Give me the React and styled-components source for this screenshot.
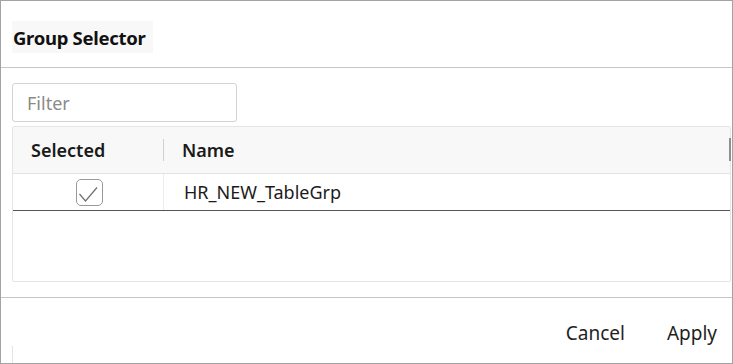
import React from "react";
import styled, { createGlobalStyle } from "styled-components";

const Global = createGlobalStyle`
  html, body { margin: 0; padding: 0; background: #fff; }
  body { font-family: "Noto Sans", "Open Sans", sans-serif; color: #1b1b1b; }
  * { box-sizing: border-box; }
`;

const Dialog = styled.div`
  width: 733px;
  height: 364px;
  border: 1px solid #a3a3a3;
  display: flex;
  flex-direction: column;
  background: #fff;
  position: relative;
`;

const Header = styled.div`
  height: 67px;
  border-bottom: 1px solid #c6c6c6;
  padding: 20px 0 0 11px;
  flex-shrink: 0;
`;

const Title = styled.div`
  display: inline-flex;
  align-items: center;
  height: 32px;
  width: 141px;
  padding-left: 1px;
  background: #f8f8f8;
  font-size: 18.5px;
  font-weight: 700;
  letter-spacing: -0.3px;
  color: #111;
`;

const Body = styled.div`
  padding: 15px 2px 15px 11px;
  display: flex;
  flex-direction: column;
  gap: 4px;
  border-bottom: 1px solid #c6c6c6;
`;

const Filter = styled.input`
  width: 225px;
  height: 39px;
  border: 1px solid #d3d3d3;
  border-radius: 3px;
  padding: 0 14px;
  font-family: inherit;
  font-size: 18px;
  color: #333;
  outline: none;
  &::placeholder { color: #8a8a8a; }
`;

const Table = styled.div`
  width: 719px;
  height: 156px;
  border: 1px solid #e5e5e5;
  border-radius: 2px;
  display: flex;
  flex-direction: column;
  position: relative;
`;

const HeadRow = styled.div`
  display: grid;
  grid-template-columns: 150px 1fr;
  height: 47px;
  background: #f8f8f8;
  border-bottom: 1px solid #e3e3e3;
  align-items: center;
`;

const HeadCell = styled.div`
  font-size: 18px;
  font-weight: 600;
  color: #1a1a1a;
  padding-left: ${(p) => p.$pad}px;
  height: 22px;
  display: flex;
  align-items: center;
  border-left: ${(p) => (p.$sep ? "1px solid #cfcfcf" : "none")};
`;

const ResizeMark = styled.div`
  position: absolute;
  right: -1px;
  top: 11px;
  width: 2px;
  height: 23px;
  background: #8f8f8f;
`;

const DataRow = styled.div`
  display: grid;
  grid-template-columns: 150px 1fr;
  height: 37px;
  border-bottom: 1px solid #555;
`;

const CheckCell = styled.div`
  display: flex;
  align-items: center;
  justify-content: center;
  padding-left: 2px;
`;

const Check = styled.div`
  width: 27px;
  height: 27px;
  border: 1px solid #9a9a9a;
  border-radius: 5px;
  display: flex;
  align-items: center;
  justify-content: center;
  background: #fff;
`;

const NameCell = styled.div`
  border-left: 1px solid #ececec;
  display: flex;
  align-items: center;
  padding-left: 20px;
  font-size: 18px;
  color: #1b1b1b;
`;

const Footer = styled.div`
  flex: 1;
  display: flex;
  justify-content: flex-end;
  align-items: flex-start;
  padding: 20px 15px 0 0;
  gap: 42px;
  position: relative;
`;

const Btn = styled.button`
  border: none;
  background: transparent;
  font-family: inherit;
  font-size: 19px;
  color: #1f1f1f;
  padding: 0;
  height: 30px;
  cursor: pointer;
`;

const Tick = styled.div`
  position: absolute;
  left: 11px;
  bottom: 0;
  width: 1px;
  height: 17px;
  background: #e4e4e4;
`;

export default function App() {
  return (
    <>
      <Global />
      <Dialog>
        <Header>
          <Title>Group Selector</Title>
        </Header>
        <Body>
          <Filter placeholder="Filter" />
          <Table>
            <HeadRow>
              <HeadCell $pad={18}>Selected</HeadCell>
              <HeadCell $pad={18} $sep>Name</HeadCell>
            </HeadRow>
            <ResizeMark />
            <DataRow>
              <CheckCell>
                <Check>
                  <svg width="25" height="25" viewBox="0 0 25 25">
                    <path d="M2.5 14 L8.5 21 L20 7.5" fill="none" stroke="#6f6f6f" strokeWidth="1.2" />
                  </svg>
                </Check>
              </CheckCell>
              <NameCell>HR_NEW_TableGrp</NameCell>
            </DataRow>
          </Table>
        </Body>
        <Footer>
          <Btn>Cancel</Btn>
          <Btn>Apply</Btn>
          <Tick />
        </Footer>
      </Dialog>
    </>
  );
}
